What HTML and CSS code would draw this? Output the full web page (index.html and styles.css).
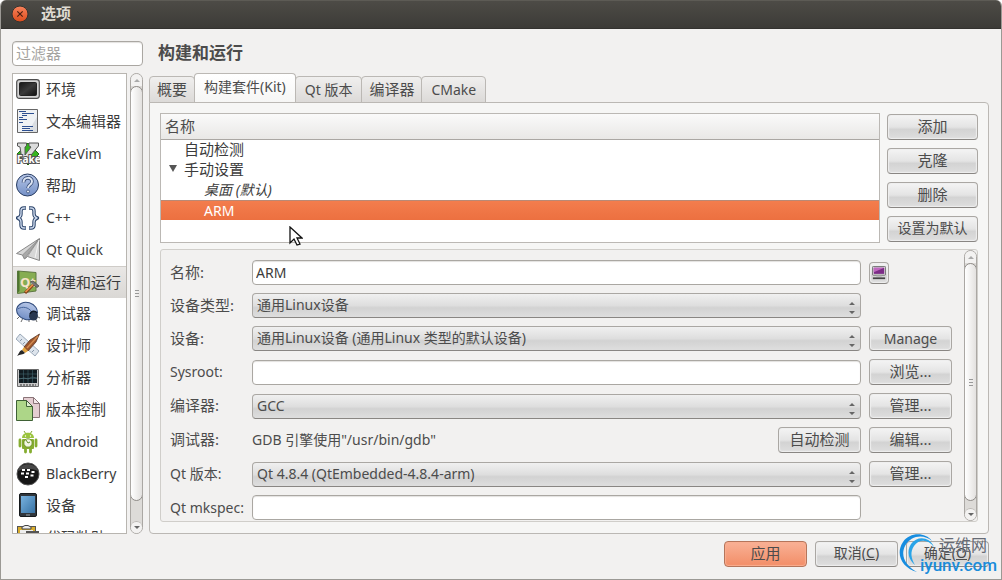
FILE: index.html
```
<!DOCTYPE html>
<html lang="zh-CN">
<head>
    <meta charset="UTF-8">
    <meta name="viewport" content="width=device-width, initial-scale=1.0">
    <title>选项</title>
    <link rel="stylesheet" href="styles.css">
</head>
<body>
    <div class="window">
        <header class="titlebar">
            <button class="close" aria-label="关闭">
                <svg width="18" height="18" viewBox="0 0 18 18">
                    <defs><linearGradient id="closeFill" x2="0" y2="1"><stop offset="0" stop-color="#f8835c"/><stop offset="1" stop-color="#dc4c1c"/></linearGradient></defs>
                    <circle cx="9" cy="9" r="8" fill="url(#closeFill)" stroke="#34332f"/>
                    <path d="M6.3 6.3l5.4 5.4M11.7 6.3l-5.4 5.4" stroke="#4b2012" stroke-width="1.2"/>
                </svg>
            </button>
            <h1>选项</h1>
        </header>

        <div class="content">
            <aside class="sidebar">
                <input class="field filter" type="text" placeholder="过滤器" aria-label="过滤器">
                <div class="list-area">
                    <ul class="list">
                        <li><button class="item">
                            <svg class="icon" viewBox="0 0 24 24">
                                <defs><linearGradient id="screen" x2="1" y2="1"><stop offset="0" stop-color="#171717"/><stop offset=".5" stop-color="#3b3b3b"/><stop offset="1" stop-color="#111"/></linearGradient></defs>
                                <rect x=".7" y="2.7" width="22.6" height="18.6" rx="2.5" fill="#d5d5d5" stroke="#4e4e4e" stroke-width="1.2"/>
                                <rect x="3.5" y="5.5" width="17" height="13" rx="1" fill="url(#screen)" stroke="#222"/>
                            </svg>环境</button></li>
                        <li><button class="item">
                            <svg class="icon" viewBox="0 0 24 24">
                                <path d="M1.5.5h20v23h-20z" fill="#eef1f4" stroke="#666"/>
                                <path d="M12 23L21 8v15z" fill="#d9dde1"/>
                                <path d="M3 2.500h7M6 4.500h12M6 6.500h5M3 8.500h4M3 10.500h8M3 13.500h4M6 17.500h11M6 19.500h8M6 21.500h11" stroke="#2c4f91"/>
                            </svg>文本编辑器</button></li>
                        <li><button class="item latin">
                            <svg class="icon" viewBox="0 0 24 24">
                                <path d="M12 1l11 11-11 11L1 12z" fill="#36b51f" stroke="#256b18"/>
                                <path d="M1.500 1h9v3L9 5v8l6-8-2-1V1h9.500v3L11 18H6L4 5 1.500 4z" fill="#dcdcdc" stroke="#555"/>
                                <text x="1" y="21" class="fake-text">Fake</text>
                            </svg>FakeVim</button></li>
                        <li><button class="item">
                            <svg class="icon" viewBox="0 0 24 24">
                                <defs><linearGradient id="blue" x2="0" y2="1"><stop offset="0" stop-color="#b6c6e7"/><stop offset="1" stop-color="#7490c6"/></linearGradient></defs>
                                <circle cx="11.5" cy="12" r="11" fill="url(#blue)" stroke="#283c61"/>
                                <path d="M7.500 9.500c0-6 8.500-6 8.500-1 0 3.500-4 3-4 6.500" fill="none" stroke="#3a4f78" stroke-width="3.600"/>
                                <path d="M7.500 9.500c0-6 8.500-6 8.500-1 0 3.500-4 3-4 6.500" fill="none" stroke="#dce4f2" stroke-width="2"/>
                                <circle cx="12" cy="18.500" r="1.500" fill="#dce4f2" stroke="#3a4f78" stroke-width=".8"/>
                            </svg>帮助</button></li>
                        <li><button class="item latin">
                            <svg class="icon" viewBox="0 0 24 24" fill="none" stroke-linejoin="round">
                                <g stroke="#2d456b" stroke-width="3.400"><path d="M10 2H8Q5 2 5 5v3q0 3-3.500 4Q5 13 5 16v3q0 3 3 3h2"/><path d="M13 2h2q3 0 3 3v3q0 3 3.500 4-3.500 1-3.500 4v3q0 3-3 3h-2"/></g>
                                <g stroke="#c8d5e9" stroke-width="1.400"><path d="M9.500 2H8Q5 2 5 5v3q0 3-3 4 3 1 3 4v3q0 3 3 3h1.500"/><path d="M13.500 2H15q3 0 3 3v3q0 3 3 4-3 1-3 4v3q0 3-3 3h-1.500"/></g>
                            </svg>C++</button></li>
                        <li><button class="item latin">
                            <svg class="icon" viewBox="0 0 24 24">
                                <path d="M23.500.5L.5 15.500l6 1.500 2 4 3-2.500 12 4z" fill="#d6d6d6" stroke="#888" stroke-linejoin="round"/>
                                <path d="M23 1L6.500 17l2 4L23 1 11.500 18.500" fill="#a9a9a9" stroke="#888" stroke-width=".7"/>
                                <path d="M23 2l-4 18" stroke="#f4f4f4"/>
                            </svg>Qt Quick</button></li>
                        <li><button class="item selected">
                            <svg class="icon" viewBox="0 0 24 24">
                                <path d="M1.500 1L20 2.500v18.500L1.500 23.500z" fill="#86ad52" stroke="#5f7843"/>
                                <path d="M1.500 1v22l2-2V1z" fill="#4d7430"/>
                                <text x="4" y="17" class="qt-text">Qt</text>
                                <path d="M9 23l9-9" stroke="#82401a" stroke-width="3"/><path d="M9.500 22l9-9" stroke="#ed9149" stroke-width="1.600"/>
                                <path d="M14 12l3-1 6 5-2 1.500-3-2" fill="#777" stroke="#4c4c4c" stroke-width=".8"/>
                            </svg>构建和运行</button></li>
                        <li><button class="item">
                            <svg class="icon" viewBox="0 0 24 24">
                                <path d="M5 14l-4 4M7 17l-2 4M13 18v3M20 19l1 2M22 16l2 1M20 9l1-1" stroke="#444" stroke-width=".8"/>
                                <ellipse cx="11" cy="10" rx="10.500" ry="8.500" transform="rotate(16 11 10)" fill="url(#blue)" stroke="#304b7c"/>
                                <path d="M1.500 8C7 5 12 6 16 11" fill="none" stroke="#46659b"/>
                                <circle cx="17.500" cy="15" r="4.500" fill="#283750"/><path d="M14 13c1-3 5-4 7-1" stroke="#111927" stroke-width="1.500" fill="none"/>
                            </svg>调试器</button></li>
                        <li><button class="item">
                            <svg class="icon" viewBox="0 0 24 24">
                                <path d="M4 1l19 17-4 5L0 6z" fill="#dde4ec" stroke="#9ba9b9"/>
                                <path d="M4 8l2-2M7 11l2-2M10 14l2-2M13 16l2-2M16 19l2-2" stroke="#8795a7"/>
                                <path d="M23.500 1L20 9l-8 9-4-4 6-7z" fill="#9b552c" stroke="#4f2b1a" stroke-width=".7"/><path d="M22 3L11 15" stroke="#d18a50" stroke-width="1.500"/>
                                <path d="M8 14l4 4-3 2-3-3z" fill="#e3a33d"/><path d="M6 17l3 3c-2 2-5 1-8 3 2-2 2-5 5-6z" fill="#262626"/>
                            </svg>设计师</button></li>
                        <li><button class="item">
                            <svg class="icon" viewBox="0 0 24 24">
                                <path d="M1.500 4.500h21v17h-21z" fill="#c8c8c8" stroke="#686868"/><path d="M3 5h18v13H3z" fill="#111b20"/>
                                <path d="M3 9h18M3 13.500h18M7.500 5v13M12 5v13M16.500 5v13" stroke="#48717b" stroke-width=".5"/><path d="M3 14l5-1 4 1 4-2 5 1" stroke="#5b7d85" stroke-width=".6" fill="none"/>
                                <path d="M4 20h16" stroke="#333" stroke-dasharray="2 1"/>
                            </svg>分析器</button></li>
                        <li><button class="item">
                            <svg class="icon" viewBox="0 0 24 24">
                                <path d="M7.500.5h10l6 6v14h-16z" fill="#e4cdd1" stroke="#8a7478"/><path d="M17.500.5v6h6z" fill="#f4e8ea" stroke="#8a7478"/>
                                <path d="M.5 3.500h10l6 6v14H.5z" fill="#add688" stroke="#3f6135"/><path d="M10.500 3.500v6h6z" fill="#dcefcd" stroke="#3f6135"/>
                            </svg>版本控制</button></li>
                        <li><button class="item latin">
                            <svg class="icon" viewBox="0 0 24 24">
                                <path d="M8 1l2 3M16 1l-2 3" stroke="#7ea52c"/><path d="M6 8c0-7 12-7 12 0z" fill="#9bc43d"/>
                                <rect x="6" y="9" width="12" height="10" rx="1" fill="#86ad31"/><path d="M4 10v6M20 10v6M9.500 18v4M14.500 18v4" stroke="#86ad31" stroke-width="2.800" stroke-linecap="round"/>
                                <circle cx="12" cy="13" r="4.200" fill="#f3f7e6" stroke="#6f9525"/><path d="M10 10l2 3 2-1" fill="none" stroke="#678b2d"/>
                                <circle cx="9.500" cy="6" r=".7" fill="#fff"/><circle cx="14.500" cy="6" r=".7" fill="#fff"/>
                            </svg>Android</button></li>
                        <li><button class="item latin">
                            <svg class="icon" viewBox="0 0 24 24">
                                <circle cx="12" cy="12" r="11" fill="#171717" stroke="#555"/><path d="M2 9C4 0 20 0 22 9 15 6 9 6 2 9z" fill="#484848"/>
                                <path d="M6 8h3M11 8h3M5 11.500h3M10 11.500h3M15.500 10h3M14.500 13.500h3M9 15h3" stroke="#fff" stroke-width="2"/>
                            </svg>BlackBerry</button></li>
                        <li><button class="item">
                            <svg class="icon" viewBox="0 0 24 24">
                                <defs><linearGradient id="device" x2="1" y2="1"><stop offset="0" stop-color="#78b2df"/><stop offset="1" stop-color="#3772a4"/></linearGradient></defs>
                                <rect x="3.500" y=".5" width="17" height="23" rx="1.500" fill="#30363c" stroke="#15191c"/><path d="M5 3h14v17H5z" fill="url(#device)"/>
                                <path d="M10 22h4" stroke="#9ba6ae"/>
                            </svg>设备</button></li>
                        <li><button class="item">
                            <svg class="icon" viewBox="0 0 24 24">
                                <rect x="1.500" y="1.500" width="18" height="20" fill="#d9ad2d" stroke="#555"/><path d="M4 5h13v15H4z" fill="#eee"/>
                                <path d="M6 4V2l3-1.500h3L15 2v2z" fill="#eee" stroke="#444"/><path d="M10 6h13v15H10z" fill="#555"/>
                            </svg>代码粘贴</button></li>
                    </ul>
                    <div class="scrollbar">
                        <span class="arrow up"></span>
                        <div class="thumb"><span class="grip"></span></div>
                        <span class="arrow down"></span>
                    </div>
                </div>
            </aside>

            <main class="page">
                <h2>构建和运行</h2>
                <div class="tabs" role="tablist">
                    <button class="tab" role="tab">概要</button>
                    <button class="tab active latin" role="tab" aria-selected="true">构建套件(Kit)</button>
                    <button class="tab latin" role="tab">Qt 版本</button>
                    <button class="tab" role="tab">编译器</button>
                    <button class="tab latin" role="tab">CMake</button>
                </div>
                <section class="panel">
                    <div class="kits">
                        <div class="tree">
                            <table>
                                <thead><tr><th>名称</th></tr></thead>
                                <tbody>
                                    <tr><td class="level-1">自动检测</td></tr>
                                    <tr><td class="level-1 open">手动设置</td></tr>
                                    <tr><td class="level-2 default">桌面 (默认)</td></tr>
                                    <tr class="current"><td class="level-2">ARM</td></tr>
                                </tbody>
                            </table>
                        </div>
                        <div class="kit-buttons">
                            <button class="btn">添加</button>
                            <button class="btn">克隆</button>
                            <button class="btn">删除</button>
                            <button class="btn">设置为默认</button>
                        </div>
                    </div>

                    <div class="details">
                        <form class="form">
                            <label for="name">名称:</label>
                            <input class="field" id="name" type="text" value="ARM">
                            <button class="btn icon-btn" type="button" aria-label="图标">
                                <svg width="14" height="14" viewBox="0 0 16 16">
                                    <rect x=".5" y=".5" width="15" height="10" rx="1" fill="#ddd" stroke="#666"/><path d="M2 2h12v7H2z" fill="#7c2c87"/><path d="M2 2h12L2 7z" fill="#c068bf"/>
                                    <path d="M5 11h6v2H5z" fill="#bbb"/><path d="M1 13h14v2H1z" fill="#444"/>
                                </svg>
                            </button>

                            <label for="type">设备类型:</label>
                            <select class="combo" id="type"><option>通用Linux设备</option></select>
                            <span></span>

                            <label for="device-name">设备:</label>
                            <select class="combo" id="device-name"><option>通用Linux设备 (通用Linux 类型的默认设备)</option></select>
                            <button class="btn latin" type="button">Manage</button>

                            <label for="sysroot" class="latin">Sysroot:</label>
                            <input class="field" id="sysroot" type="text">
                            <button class="btn tall" type="button">浏览...</button>

                            <label for="compiler">编译器:</label>
                            <select class="combo" id="compiler"><option>GCC</option></select>
                            <button class="btn tall" type="button">管理...</button>

                            <span class="caption">调试器:</span>
                            <div class="debugger">
                                <span>GDB 引擎使用"/usr/bin/gdb"</span>
                                <button class="btn tall" type="button">自动检测</button>
                            </div>
                            <button class="btn tall" type="button">编辑...</button>

                            <label for="qt" class="latin">Qt 版本:</label>
                            <select class="combo" id="qt"><option>Qt 4.8.4 (QtEmbedded-4.8.4-arm)</option></select>
                            <button class="btn tall" type="button">管理...</button>

                            <label for="mkspec" class="latin">Qt mkspec:</label>
                            <input class="field" id="mkspec" type="text">
                            <span></span>
                        </form>
                        <div class="scrollbar">
                            <span class="arrow up"></span>
                            <div class="thumb long"><span class="grip"></span></div>
                            <span class="arrow down"></span>
                        </div>
                    </div>
                </section>
            </main>
        </div>

        <footer class="actions">
            <button class="btn primary">应用</button>
            <button class="btn">取消(<u>C</u>)</button>
            <button class="btn">确定(<u>O</u>)</button>
        </footer>

        <div class="watermark">
            <svg width="40" height="40" viewBox="0 0 40 40" fill="none">
                <path d="M34 8C27-1 12-1 5 9-3 21 4 35 19 39 8 33 2 23 7 13 13 2 26 1 34 8z" fill="#168de0"/>
                <path d="M36 14C31 3 19 3 13 11c-5 8-2 16 4 21-4-7-5-13-1-19 5-7 14-7 20 1z" fill="#29a4e8"/>
            </svg>
            <span class="mark-name">运维网</span>
            <span class="mark-url">iyunv.com</span>
        </div>
        <svg class="cursor" width="14" height="21" viewBox="0 0 14 21">
            <path d="M1 1v16l4-4 3 6 3-1-3-6h5z" fill="#fff" stroke="#111" stroke-width="1.300"/>
        </svg>
    </div>
</body>
</html>
```
FILE: styles.css
```
* {
    box-sizing: border-box;
}
body {
    margin: 0;
    background: #fff;
    color: #4c4c4c;
    font-family: "Noto Sans", "Noto Sans CJK SC", sans-serif;
    font-size: 14px;
    line-height: 20px;
}
button, input, select {
    font: inherit;
    color: inherit;
    margin: 0;
}
.window {
    position: relative;
    display: flex;
    flex-direction: column;
    height: 100vh;
    min-height: 580px;
    background: #f2f1f0;
    border: 1px solid #9b9994;
    border-top: 0;
    border-radius: 6px 6px 0 0;
    overflow: hidden;
}
.titlebar {
    display: flex;
    align-items: center;
    gap: 12px;
    height: 29px;
    flex-shrink: 0;
    padding: 0 0 1px 10px;
    background: linear-gradient(#4d4b46, #3c3b37);
    border-top: 1px solid #5d5b55;
    border-bottom: 1px solid #33322f;
    color: #dfdbd2;
}
.titlebar h1 {
    margin: 0;
    padding-bottom: 2px;
    font-size: 15px;
    line-height: 20px;
}
.close {
    display: flex;
    padding: 0;
    border: 0;
    background: none;
}
.content {
    display: flex;
    flex: 1;
    min-height: 0;
    gap: 6px;
    padding: 12px 12px 0 11px;
}
.sidebar {
    display: flex;
    flex-direction: column;
    gap: 7px;
    width: 131px;
    flex-shrink: 0;
}
.field {
    width: 100%;
    height: 25px;
    padding: 0 3px;
    border: 1px solid #aaa7a2;
    border-radius: 4px;
    background: #fff;
    color: #3c3c3c;
    box-shadow: inset 0 1px 1px #e3e1df;
}
.filter {
    padding-bottom: 2px;
    font-size: 15px;
}
.filter::placeholder {
    color: #a5a3a0;
    opacity: 1;
}
.list-area {
    display: flex;
    gap: 3px;
    flex: 1;
    min-height: 0;
}
.list {
    flex: 1;
    min-width: 0;
    margin: 0;
    padding: 0;
    list-style: none;
    overflow: hidden;
    background: #fff;
    border: 1px solid #b8b5b0;
}
.item {
    display: flex;
    align-items: center;
    gap: 6px;
    width: 100%;
    height: 32px;
    padding: 0 3px 2px;
    border: 0;
    background: none;
    color: #3c3c3c;
    font-size: 15px;
    white-space: nowrap;
}
.item.selected {
    background: linear-gradient(#e9e7e5, #dad8d5);
    border-top: 1px solid #cfccc8;
}
.icon {
    width: 24px;
    height: 24px;
    flex-shrink: 0;
}
.fake-text {
    font-size: 10px;
    font-weight: bold;
    fill: #fff;
    stroke: #555;
    stroke-width: 2px;
    paint-order: stroke;
}
.qt-text {
    font-size: 13px;
    font-weight: bold;
    fill: #f7e2c9;
}
.latin {
    font-size: 14px;
}
.item.latin {
    padding-bottom: 0;
    font-size: 14px;
}

/* scrollbars */
.scrollbar {
    display: flex;
    flex-direction: column;
    width: 13px;
    flex-shrink: 0;
    border: 1px solid #aaa7a3;
    border-radius: 7px;
    background: #dddbd8;
    overflow: hidden;
}
.arrow {
    display: flex;
    justify-content: center;
    align-items: center;
    height: 12px;
    background: #f3f2f1;
}
.arrow::before {
    content: "";
    border: 3px solid transparent;
}
.arrow.up::before {
    border-top: 0;
    border-bottom-color: #aaa;
}
.arrow.down::before {
    border-bottom: 0;
    border-top-color: #666;
}
.arrow.down {
    border-radius: 6px 6px 0 0;
    border-top: 1px solid #bbb8b4;
}
.thumb {
    display: flex;
    align-items: center;
    justify-content: center;
    flex: 1;
    margin: 0 -1px 20px;
    border: 1px solid #8f8c88;
    border-radius: 7px;
    background: linear-gradient(90deg, #fff, #e3e1df);
}
.thumb.long {
    margin-bottom: 7px;
}
.grip {
    width: 4px;
    height: 7px;
    background: repeating-linear-gradient(#999 0 1px, transparent 1px 3px);
}

/* main page */
.page {
    flex: 1;
    min-width: 0;
    display: flex;
    flex-direction: column;
}
.page h2 {
    margin: 0 0 8px 9px;
    font-size: 17px;
    line-height: 24px;
}
.tabs {
    display: flex;
    align-items: flex-end;
    height: 30px;
    margin-bottom: -1px;
}
.tab {
    height: 27px;
    padding: 0 7px 2px;
    margin-left: -1px;
    border: 1px solid #bbb8b4;
    border-radius: 4px 4px 0 0;
    background: linear-gradient(#f0efee, #dcdad8);
    font-size: 15px;
}
.tab:first-child {
    margin-left: 0;
}
.tab.latin {
    padding: 0 9px;
    font-size: 14px;
}
.tab.active {
    height: 30px;
    padding-bottom: 2px;
    border-bottom-color: #f6f6f5;
    background: linear-gradient(#fff, #f6f6f5);
}
.panel {
    display: flex;
    flex-direction: column;
    flex: 1;
    gap: 6px;
    padding: 10px;
    border: 1px solid #bbb8b4;
    border-radius: 0 4px 4px 4px;
    background: #f6f6f5;
}
.kits {
    display: flex;
    gap: 7px;
}
.tree {
    flex: 1;
    border: 1px solid #bbb8b4;
    background: #fff;
}
.tree table {
    width: 100%;
    border-spacing: 0;
}
.tree th {
    height: 26px;
    padding: 0 4px 1px;
    border-bottom: 1px solid #aaa7a3;
    background: linear-gradient(#fafafa, #e9e8e6);
    text-align: left;
    font-size: 15px;
    font-weight: normal;
}
.tree td {
    height: 20px;
    padding: 0;
    line-height: 18px;
    color: #3c3c3c;
}
.tree .level-1 {
    padding: 0 0 2px 23px;
    font-size: 15px;
}
.tree .level-2 {
    padding-left: 43px;
}
.tree .open::before {
    content: "";
    display: inline-block;
    margin: 0 7px 3px -15px;
    border: 4px solid transparent;
    border-top: 7px solid #555;
    border-bottom: 0;
}
.tree .default {
    padding-bottom: 1px;
    font-style: italic;
}
.tree .current td {
    background: linear-gradient(#f37d4d, #ec7040);
    border-top: 1px solid #b98975;
    color: #fff;
}
.kit-buttons {
    display: grid;
    gap: 8px;
    width: 91px;
    padding: 1px 0;
}
.btn {
    height: 25px;
    padding: 0 5px;
    border: 1px solid #aaa7a3;
    border-bottom-color: #898683;
    border-radius: 4px;
    background: linear-gradient(#f4f4f4, #e4e4e4 50%, #d3d3d3 60%, #dedede);
    box-shadow: inset 0 0 1px 1px #efefef;
    line-height: 20px;
    font-size: 15px;
    white-space: nowrap;
}
.kit-buttons .btn, .actions .btn, .btn.tall {
    height: 26px;
    padding-bottom: 2px;
}
.btn.latin {
    font-size: 14px;
}
.kit-buttons .btn:last-child {
    font-size: 14px;
}
.details {
    display: flex;
    justify-content: space-between;
    gap: 12px;
    border: 1px solid #d0ceca;
    border-radius: 3px;
    background: #f2f1f0;
}
.form {
    flex: 1;
    display: grid;
    grid-template-columns: 74px 1fr 83px;
    gap: 8px;
    align-items: center;
    padding: 10px 0 1px 9px;
}
.form label, .caption {
    padding-bottom: 2px;
    font-size: 15px;
    white-space: nowrap;
}
.form label.latin {
    padding-bottom: 0;
    font-size: 14px;
}
.btn.icon-btn {
    display: flex;
    align-items: center;
    justify-content: center;
    width: 20px;
    height: 22px;
    padding: 0;
}
.combo {
    appearance: none;
    width: 100%;
    height: 25px;
    padding: 0 20px 1px 4px;
    border: 1px solid #aaa7a3;
    border-bottom-color: #898683;
    border-radius: 4px;
    background:
        url("data:image/svg+xml,%3Csvg xmlns='http://www.w3.org/2000/svg' width='6' height='12'%3E%3Cpath d='M0 3l3-3 3 3zM0 9l3 3 3-3z' fill='%23666'/%3E%3C/svg%3E") no-repeat right 5px top 8px,
        linear-gradient(#f0f0f0, #dedede 50%, #d2d2d2 60%, #dedede);
    line-height: 20px;
}
.debugger {
    display: flex;
    align-items: center;
    justify-content: space-between;
}
.debugger .btn {
    width: 83px;
}

/* bottom buttons */
.actions {
    display: flex;
    justify-content: flex-end;
    gap: 8px;
    padding: 7px 12px 12px;
}
.actions .btn {
    width: 83px;
}
.actions .btn:not(.primary) {
    font-size: 14px;
}
.actions .primary {
    border-color: #b5755b;
    background: linear-gradient(#f9b196, #f28d67);
    box-shadow: inset 0 0 1px 1px #f9ae91;
}
.watermark {
    position: absolute;
    right: 4px;
    bottom: 4px;
    width: 99px;
    height: 42px;
    pointer-events: none;
}
.mark-name {
    position: absolute;
    right: 10px;
    top: 2px;
    color: #666b75;
    font-size: 16px;
}
.mark-url {
    position: absolute;
    right: 0;
    bottom: 0;
    color: #198cdb;
    font-family: Roboto, sans-serif;
    font-size: 17px;
    font-weight: 500;
}
.cursor {
    position: absolute;
    left: 288px;
    top: 226px;
}
```
